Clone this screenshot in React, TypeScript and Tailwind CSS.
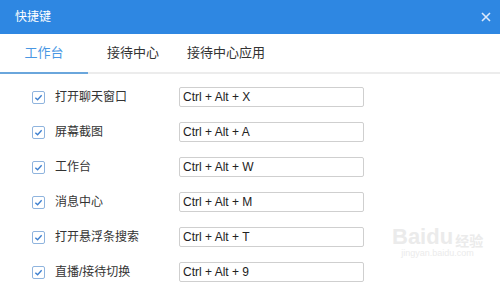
const shortcuts = [
    { label: '打开聊天窗口', keys: 'Ctrl + Alt + X' },
    { label: '屏幕截图', keys: 'Ctrl + Alt + A' },
    { label: '工作台', keys: 'Ctrl + Alt + W' },
    { label: '消息中心', keys: 'Ctrl + Alt + M' },
    { label: '打开悬浮条搜索', keys: 'Ctrl + Alt + T' },
    { label: '直播/接待切换', keys: 'Ctrl + Alt + 9' },
];

const fontStack = "font-['Liberation_Sans','Noto_Sans_CJK_SC',sans-serif]";

function CheckBox() {
    return (
        <span className="flex h-[13px] w-[13px] items-center justify-center rounded-[2px] border border-[#8fb4de] bg-white">
            <svg width="9" height="9" viewBox="0 0 10 10" fill="none">
                <path d="M1.5 5.2 L4 7.5 L8.5 2.5" stroke="#3d7fcf" strokeWidth="1.5" />
            </svg>
        </span>
    );
}

export default function App() {
    return (
        <div className={`relative h-[283px] w-[500px] overflow-hidden bg-white ${fontStack}`}>
            <div className="flex h-[34px] items-center justify-between bg-[#2e87e2] pl-[15px] pr-[9px]">
                <span className="text-[12px] text-white">快捷键</span>
                <svg width="10" height="10" viewBox="0 0 10 10">
                    <path d="M1 1 L9 9 M9 1 L1 9" stroke="#dbe9fb" strokeWidth="1.6" />
                </svg>
            </div>

            <div className="flex h-[40px] items-center border-b-2 border-[#ececec] text-[13px] text-[#333]">
                <div className="relative flex h-full w-[88px] items-center justify-center text-[#4a97e3]">
                    工作台
                    <span className="absolute -bottom-[2px] left-0 h-[2px] w-[88px] bg-[#6aa6dc]" />
                </div>
                <span className="ml-[19px]">接待中心</span>
                <span className="ml-[28px]">接待中心应用</span>
            </div>

            <div className="flex flex-col gap-[15px] pt-[13px]">
                {shortcuts.map((s) => (
                    <div key={s.label} className="flex h-[20px] items-center">
                        <div className="ml-[32px]">
                            <CheckBox />
                        </div>
                        <span className="ml-[10px] w-[124px] text-[12px] text-[#333]">{s.label}</span>
                        <div className="flex h-[20px] w-[185px] items-center rounded-[2px] border border-[#cfcfcf] pl-[3px] text-[12px] text-[#222]">
                            {s.keys}
                        </div>
                    </div>
                ))}
            </div>

            <div className="absolute left-[392px] top-[226px] flex flex-col items-center text-[#ebebeb]">
                <div className="flex items-end">
                    <span className="text-[22px] font-bold leading-none">Bai</span>
                    <span className="text-[22px] font-bold leading-none">du</span>
                    <span className="ml-[2px] text-[14px] font-bold leading-none">经验</span>
                </div>
                <span className="text-[9px] leading-tight">jingyan.baidu.com</span>
            </div>
        </div>
    );
}
